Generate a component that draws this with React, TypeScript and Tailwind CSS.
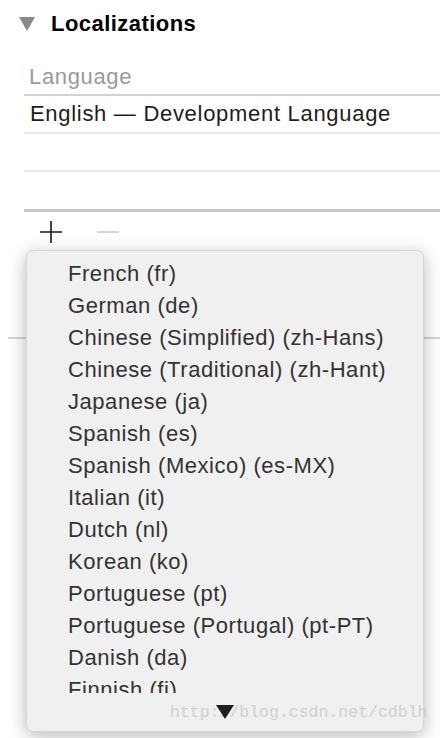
import React from "react";

const languages = [
  "French (fr)",
  "German (de)",
  "Chinese (Simplified) (zh-Hans)",
  "Chinese (Traditional) (zh-Hant)",
  "Japanese (ja)",
  "Spanish (es)",
  "Spanish (Mexico) (es-MX)",
  "Italian (it)",
  "Dutch (nl)",
  "Korean (ko)",
  "Portuguese (pt)",
  "Portuguese (Portugal) (pt-PT)",
  "Danish (da)",
  "Finnish (fi)",
  "Norwegian Bokmål (nb)",
];

const font = { fontFamily: '"Liberation Sans", Arial, sans-serif' };

export default function App() {
  return (
    <div
      className="relative w-[440px] h-[738px] overflow-hidden bg-white text-[22px] leading-none tracking-[0.55px]"
      style={font}
    >
      {/* Section header */}
      <div className="flex items-center h-[48px] pl-[19px] gap-[16px]">
        <svg width="16" height="14" viewBox="0 0 16 14" className="shrink-0">
          <path d="M0 0 H16 L8 14 Z" fill="#8a8a8a" />
        </svg>
        <span className="font-bold text-black tracking-[0.45px]">Localizations</span>
      </div>

      {/* Table */}
      <div className="ml-[24px] mt-[12px]">
        <div className="h-[36px] flex items-center pl-[5px] text-[#9a9a9a] tracking-[0.65px] border-b-2 border-[#d2d2d2]">
          Language
        </div>
        <div className="h-[38px] flex items-center pl-[6px] text-[#1e1e1e] tracking-[0.7px] border-b-2 border-[#e8e8e8]">
          English — Development Language
        </div>
        <div className="h-[38px] border-b-2 border-[#e8e8e8]" />
        <div className="h-[40px] border-b-[3px] border-[#c8c8c8]" />
      </div>

      {/* Add / remove */}
      <div className="flex items-center h-[40px] pl-[40px] gap-[35px]">
        <svg width="22" height="22" viewBox="0 0 22 22">
          <path d="M11 0 V22 M0 11 H22" stroke="#1a1a1a" strokeWidth="1.6" />
        </svg>
        <svg width="22" height="22" viewBox="0 0 22 22">
          <path d="M0 11 H22" stroke="#c8c8c8" strokeWidth="1.6" />
        </svg>
      </div>

      {/* Separator behind the popup */}
      <div className="ml-[8px] mt-[85px] h-[2px] bg-[#d4d4d4]" />

      {/* Popup menu */}
      <div className="absolute left-[26px] top-[250px] w-[398px] h-[482px] rounded-[7px] bg-[#f0f0f0] border border-[#d6d6d6] shadow-[0_4px_18px_rgba(0,0,0,0.28)] flex flex-col">
        <div className="h-[442px] overflow-hidden pt-[7px]">
          {languages.map((l) => (
            <div key={l} className="h-[32px] flex items-center pl-[41px] text-[#333]">
              {l}
            </div>
          ))}
        </div>
        <div className="relative flex-1 flex justify-center pt-[12px]">
          <svg width="18" height="14" viewBox="0 0 18 14" className="relative z-10">
            <path d="M0 0 H18 L9 14 Z" fill="#1f1f1f" />
          </svg>
        </div>
      </div>

      {/* Watermark */}
      <div
        className="absolute left-[170px] top-[705px] text-[16.5px] leading-none tracking-normal text-[#cfcfcf]"
        style={{ fontFamily: '"Liberation Mono", "Courier New", monospace' }}
      >
        http://blog.csdn.net/cdblh
      </div>
    </div>
  );
}
